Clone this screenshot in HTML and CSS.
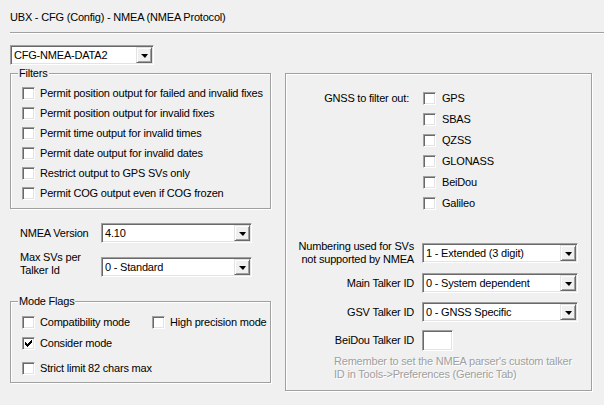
FILE: index.html
```html
<!DOCTYPE html>
<html>
<head>
<meta charset="utf-8">
<title>UBX - CFG (Config) - NMEA</title>
<link rel="stylesheet" href="styles.css">
</head>
<body>
<div class="page">
  <div class="title">UBX - CFG (Config) - NMEA (NMEA Protocol)</div>
  <div class="sep"></div>
  <div class="main">
    <div class="left">
      <div class="combo combo-msg"><span class="val">CFG-NMEA-DATA2</span><span class="btn"><i class="arrow"></i></span></div>

      <fieldset class="group filters">
        <legend>Filters</legend>
        <label class="chk frow"><span class="box"></span>Permit position output for failed and invalid fixes</label>
        <label class="chk frow"><span class="box"></span>Permit position output for invalid fixes</label>
        <label class="chk frow"><span class="box"></span>Permit time output for invalid times</label>
        <label class="chk frow"><span class="box"></span>Permit date output for invalid dates</label>
        <label class="chk frow"><span class="box"></span>Restrict output to GPS SVs only</label>
        <label class="chk frow"><span class="box"></span>Permit COG output even if COG frozen</label>
      </fieldset>

      <div class="lrow nmea-row">
        <span class="llabel">NMEA Version</span>
        <div class="combo combo-left"><span class="val">4.10</span><span class="btn"><i class="arrow"></i></span></div>
      </div>
      <div class="lrow maxsv-row">
        <span class="llabel two">Max SVs per<br>Talker Id</span>
        <div class="combo combo-left combo-low"><span class="val">0 - Standard</span><span class="btn"><i class="arrow"></i></span></div>
      </div>

      <fieldset class="group modes">
        <legend>Mode Flags</legend>
        <div class="mrow">
          <label class="chk mcol"><span class="box"></span>Compatibility mode</label>
          <label class="chk"><span class="box"></span>High precision mode</label>
        </div>
        <div class="mrow">
          <label class="chk"><span class="box checked"><svg width="7" height="7" viewBox="0 0 7 7" shape-rendering="crispEdges"><path d="M6 0h1v1h-1z M5 1h2v1h-2z M0 2h1v1h-1z M4 2h3v1h-3z M0 3h2v1h-2z M3 3h3v1h-3z M0 4h5v1h-5z M1 5h3v1h-3z M2 6h1v1h-1z" fill="#000"/></svg></span>Consider mode</label>
        </div>
        <div class="mrow mrow-last">
          <label class="chk"><span class="box"></span>Strict limit 82 chars max</label>
        </div>
      </fieldset>
    </div>

    <fieldset class="group right">
      <div class="rrow gnss-row">
        <span class="rlabel gnss-label">GNSS to filter out:</span>
        <div class="gnss-list">
          <label class="chk grow"><span class="box"></span>GPS</label>
          <label class="chk grow"><span class="box"></span>SBAS</label>
          <label class="chk grow"><span class="box"></span>QZSS</label>
          <label class="chk grow"><span class="box"></span>GLONASS</label>
          <label class="chk grow"><span class="box"></span>BeiDou</label>
          <label class="chk grow"><span class="box"></span>Galileo</label>
        </div>
      </div>
      <div class="rrow num-row">
        <span class="rlabel">Numbering used for SVs<br>not supported by NMEA</span>
        <div class="combo combo-right"><span class="val">1 - Extended (3 digit)</span><span class="btn"><i class="arrow"></i></span></div>
      </div>
      <div class="rrow main-row">
        <span class="rlabel">Main Talker ID</span>
        <div class="combo combo-right"><span class="val">0 - System dependent</span><span class="btn"><i class="arrow"></i></span></div>
      </div>
      <div class="rrow gsv-row">
        <span class="rlabel">GSV Talker ID</span>
        <div class="combo combo-right"><span class="val">0 - GNSS Specific</span><span class="btn"><i class="arrow"></i></span></div>
      </div>
      <div class="rrow bd-row">
        <span class="rlabel">BeiDou Talker ID</span>
        <div class="edit"></div>
      </div>
      <div class="note">Remember to set the NMEA parser's custom talker<br>ID in Tools-&gt;Preferences (Generic Tab)</div>
    </fieldset>
  </div>
</div>
</body>
</html>
```
FILE: styles.css
```css
* { box-sizing: border-box; }

html, body {
  margin: 0;
  padding: 0;
  width: 604px;
  height: 405px;
  overflow: hidden;
  background: #f0f0f0;
}

body {
  font-family: "Liberation Sans", Arial, sans-serif;
  font-size: 11px;
  line-height: 13px;
  letter-spacing: -0.2px;
  color: #000;
}

.page {
  padding: 0 12px 0 10px;
}

.title {
  padding-top: 11px;
  height: 24px;
  white-space: nowrap;
}

.sep {
  margin-top: 8px;
  margin-right: -12px;
  border-top: 1px solid #a0a0a0;
  border-bottom: 1px solid #fff;
}

.main {
  display: flex;
  margin-top: 11px;
  gap: 14px;
}

.left {
  width: 261px;
  display: flex;
  flex-direction: column;
}

/* ---------- group boxes ---------- */
.group {
  margin: 0;
  min-width: 0;
  border: 1px solid #a0a0a0;
  box-shadow: inset 1px 1px #fff, 1px 1px #fff;
  padding: 0;
}

.group legend {
  padding: 0 1px;
  margin-left: -4px;
  line-height: 13px;
  background: #f0f0f0;
}

/* ---------- combobox ---------- */
.combo {
  display: flex;
  align-items: center;
  height: 20px;
  background: #fff;
  border-top: 1px solid #a0a0a0;
  border-left: 1px solid #a0a0a0;
  border-right: 1px solid #fff;
  border-bottom: 1px solid #fff;
  box-shadow: inset 1px 1px #696969, inset -1px -1px #e3e3e3;
  padding: 1px;
}

.combo .val {
  flex: 1;
  padding-left: 2px;
  white-space: nowrap;
  overflow: hidden;
}

.combo .btn {
  width: 16px;
  height: 16px;
  display: flex;
  align-items: center;
  justify-content: center;
  background: #f0f0f0;
  border-top: 1px solid #e3e3e3;
  border-left: 1px solid #e3e3e3;
  border-right: 1px solid #696969;
  border-bottom: 1px solid #696969;
  box-shadow: inset 1px 1px #fff, inset -1px -1px #a0a0a0;
}

.arrow {
  width: 0;
  height: 0;
  border-left: 4px solid transparent;
  border-right: 3px solid transparent;
  border-top: 4px solid #000;
  margin-left: 1px;
  margin-top: 1px;
}

.combo-msg {
  width: 144px;
}

.combo-left {
  width: 151px;
}

.combo-right {
  width: 156px;
}

/* ---------- checkbox ---------- */
.chk {
  display: flex;
  align-items: center;
  white-space: nowrap;
}

.box {
  flex: none;
  width: 13px;
  height: 13px;
  margin-right: 5px;
  background: #fff;
  border-top: 1px solid #a0a0a0;
  border-left: 1px solid #a0a0a0;
  border-right: 1px solid #fff;
  border-bottom: 1px solid #fff;
  box-shadow: inset 1px 1px #696969, inset -1px -1px #e3e3e3;
  display: flex;
  align-items: center;
  justify-content: center;
}

.box svg {
  display: block;
}

/* ---------- filters ---------- */
.filters {
  margin-top: 2px;
  padding: 3px 0 5px 11px;
}

.frow {
  height: 20px;
}

/* ---------- left rows ---------- */
.lrow {
  display: flex;
  align-items: center;
}

.llabel {
  width: 91px;
  padding-left: 10px;
  white-space: nowrap;
}

.nmea-row {
  margin-top: 14px;
  height: 20px;
}

.maxsv-row {
  margin-top: 8px;
  align-items: flex-start;
}

.combo-low {
  margin-top: 6px;
}

/* ---------- mode flags ---------- */
.modes {
  margin-top: 18px;
  padding: 4px 0 3px 11px;
}

.mrow {
  display: flex;
  height: 21px;
}

.mrow-last {
  margin-top: 4px;
}

.mcol {
  width: 130px;
}

/* ---------- right group ---------- */
.right {
  width: 307px;
  margin-top: 28px;
  padding: 14px 0 9px 10px;
  align-self: flex-start;
}

.rrow {
  display: flex;
  align-items: center;
}

.rlabel {
  width: 118px;
  margin-right: 8px;
  text-align: right;
  white-space: nowrap;
  display: flex;
  justify-content: flex-end;
}

.gnss-row {
  align-items: flex-start;
}

.gnss-label {
  padding-right: 5px;
  margin-right: 9px;
  height: 21px;
  align-items: center;
}

.gnss-list {
  display: flex;
  flex-direction: column;
}

.grow {
  height: 21px;
}

.grow .box {
  margin-right: 6px;
}

.num-row {
  margin-top: 26px;
}

.main-row {
  margin-top: 7px;
}

.gsv-row {
  margin-top: 9px;
}

.bd-row {
  margin-top: 8px;
}

.edit {
  width: 31px;
  height: 21px;
  background: #fff;
  border-top: 1px solid #a0a0a0;
  border-left: 1px solid #a0a0a0;
  border-right: 1px solid #fff;
  border-bottom: 1px solid #fff;
  box-shadow: inset 1px 1px #696969, inset -1px -1px #e3e3e3;
}

.note {
  margin-top: 4px;
  padding-left: 38px;
  color: #a0a0a0;
  text-shadow: 1px 1px #fff;
  white-space: nowrap;
}
```
